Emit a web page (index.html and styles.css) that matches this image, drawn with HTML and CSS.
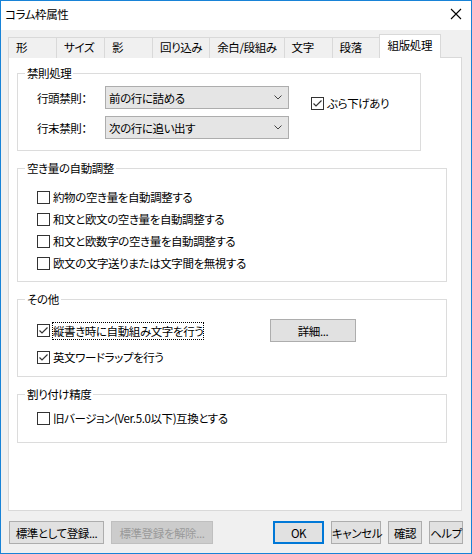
FILE: index.html
```html
<!DOCTYPE html>
<html lang="ja">
<head>
  <meta charset="UTF-8" />
  <title>コラム枠属性</title>
  <link rel="stylesheet" href="styles.css">
</head>
<body>
  <div class="window">
    <div class="titlebar">
      <span class="title">コラム枠属性</span>
      <svg class="close" width="12" height="12" viewBox="0 0 12 12">
        <path d="M1 1 L11 11 M11 1 L1 11" stroke="#000" stroke-width="1.1" fill="none" />
      </svg>
    </div>

    <div class="tabs">
      <div class="tab">形</div>
      <div class="tab">サイズ</div>
      <div class="tab">影</div>
      <div class="tab">回り込み</div>
      <div class="tab">余白/段組み</div>
      <div class="tab">文字</div>
      <div class="tab">段落</div>
      <div class="tab active">組版処理</div>
    </div>

    <div class="panel">
      <fieldset class="group narrow">
        <legend>禁則処理</legend>
        <div class="kinsoku">
          <div class="fields">
            <div class="field">
              <span class="field-label">行頭禁則：</span>
              <div class="select">前の行に詰める
                <svg class="chevron" width="8" height="5" viewBox="0 0 8 5"><path d="M0.5 0.5 L4 4 L7.5 0.5" stroke="#444" fill="none" /></svg>
              </div>
            </div>
            <div class="field">
              <span class="field-label">行末禁則：</span>
              <div class="select">次の行に追い出す
                <svg class="chevron" width="8" height="5" viewBox="0 0 8 5"><path d="M0.5 0.5 L4 4 L7.5 0.5" stroke="#444" fill="none" /></svg>
              </div>
            </div>
          </div>
          <label class="check">
            <span class="box"><svg width="11" height="11" viewBox="0 0 11 11"><path d="M1.5 5.5 L4 8 L9.5 2.5" stroke="#333" stroke-width="1.2" fill="none" /></svg></span>
            ぶら下げあり
          </label>
        </div>
      </fieldset>

      <fieldset class="group">
        <legend>空き量の自動調整</legend>
        <div class="checklist spacing">
          <label class="check"><span class="box"></span>約物の空き量を自動調整する</label>
          <label class="check"><span class="box"></span>和文と欧文の空き量を自動調整する</label>
          <label class="check"><span class="box"></span>和文と欧数字の空き量を自動調整する</label>
          <label class="check"><span class="box"></span>欧文の文字送りまたは文字間を無視する</label>
        </div>
      </fieldset>

      <fieldset class="group">
        <legend>その他</legend>
        <div class="other">
          <div class="other-row">
            <label class="check wide">
              <span class="box"><svg width="11" height="11" viewBox="0 0 11 11"><path d="M1.5 5.5 L4 8 L9.5 2.5" stroke="#333" stroke-width="1.2" fill="none" /></svg></span>
              <span class="focused">縦書き時に自動組み文字を行う</span>
            </label>
            <button class="btn detail">詳細...</button>
          </div>
          <label class="check">
            <span class="box"><svg width="11" height="11" viewBox="0 0 11 11"><path d="M1.5 5.5 L4 8 L9.5 2.5" stroke="#333" stroke-width="1.2" fill="none" /></svg></span>
            英文ワードラップを行う
          </label>
        </div>
      </fieldset>

      <fieldset class="group">
        <legend>割り付け精度</legend>
        <div class="checklist precision">
          <label class="check"><span class="box"></span>旧バージョン(Ver.5.0以下)互換とする</label>
        </div>
      </fieldset>
    </div>

    <div class="footer">
      <button class="btn register">標準として登録...</button>
      <button class="btn disabled">標準登録を解除...</button>
      <div class="footer-right">
        <button class="btn ok">OK</button>
        <button class="btn cancel">キャンセル</button>
        <button class="btn small">確認</button>
        <button class="btn small">ヘルプ</button>
      </div>
    </div>
  </div>
</body>
</html>
```

FILE: styles.css
```css
body {
  margin: 0;
  background: #fff;
  font-family: "Noto Sans CJK JP", "Noto Sans", sans-serif;
  font-size: 11.5px;
  letter-spacing: -0.4px;
  color: #000;
  font-feature-settings: "palt";
}

.window {
  width: 472px;
  height: 554px;
  box-sizing: border-box;
  border: 1px solid #1883d7;
  background: #f0f0f0;
}

.titlebar {
  height: 29px;
  background: #fff;
  display: flex;
  align-items: center;
  padding: 0 9px 0 4px;
}

.title {
  flex: 1;
  line-height: 16px;
  margin-top: -4px;
}

.close {
  margin-top: -4px;
}

/* tabs */
.tabs {
  display: flex;
  align-items: flex-end;
  height: 24px;
  margin: 4px 0 -1px 7px;
  position: relative;
  z-index: 1;
}

.tab {
  min-width: 49px;
  box-sizing: border-box;
  height: 21px;
  padding: 0 7px 0 7px;
  line-height: 19px;
  border: 1px solid #d9d9d9;
  border-bottom: none;
  margin-left: -1px;
  background: #f0f0f0;
  white-space: nowrap;
}

.tab:first-child {
  margin-left: 0;
}

.tab.active {
  height: 24px;
  line-height: 20px;
  padding: 0 8px 0 8px;
  background: #fff;
  margin-left: -2px;
}

/* panel */
.panel {
  margin: 0 9px 0 7px;
  height: 454px;
  box-sizing: border-box;
  border: 1px solid #d9d9d9;
  background: #fff;
  padding-top: 7px;
}

.group {
  margin: 0 14px 9px 8px;
  padding: 0;
  border: 1px solid #dcdcdc;
  min-width: 0;
}

.group.narrow {
  margin-right: 40px;
}

.group legend {
  margin-left: 7px;
  padding: 0 2px;
  line-height: 16px;
}

/* 禁則処理 */
.kinsoku {
  display: flex;
  align-items: flex-start;
  padding: 5px 0 11px 19px;
}

.fields {
  display: flex;
  flex-direction: column;
  gap: 7px;
}

.field {
  display: flex;
  align-items: center;
}

.field-label {
  width: 68px;
}

.select {
  width: 184px;
  height: 23px;
  box-sizing: border-box;
  border: 1px solid #adadad;
  background: #e5e5e5;
  display: flex;
  align-items: center;
  justify-content: space-between;
  padding: 0 6px 0 3px;
  line-height: 20px;
}

.kinsoku > .check {
  margin: 6px 0 0 22px;
}

/* checkboxes */
.check {
  display: flex;
  align-items: center;
  height: 22px;
  gap: 3px;
  white-space: nowrap;
}

.box {
  width: 13px;
  height: 13px;
  box-sizing: border-box;
  border: 1px solid #333;
  background: #fff;
  display: flex;
  align-items: center;
  justify-content: center;
  flex-shrink: 0;
}

.checklist {
  padding-left: 19px;
}

.spacing {
  padding-top: 10px;
  padding-bottom: 7px;
}

.precision {
  padding-top: 5px;
  padding-bottom: 13px;
}

/* その他 */
.other {
  padding: 12px 0 8px 19px;
  display: flex;
  flex-direction: column;
  gap: 4px;
}

.other-row {
  display: flex;
  align-items: center;
}

.check.wide {
  width: 233px;
}

.focused {
  outline: 1px dotted #000;
  line-height: 16px;
}

/* buttons */
.btn {
  font: inherit;
  letter-spacing: inherit;
  font-feature-settings: "palt";
  height: 23px;
  box-sizing: border-box;
  border: 1px solid #adadad;
  background: #e1e1e1;
  color: #000;
  padding: 0;
  line-height: 20px;
  white-space: nowrap;
}

.detail {
  width: 86px;
}

.btn.register {
  width: 95px;
}

.btn.disabled {
  background: #cccccc;
  border-color: #bfbfbf;
  color: #9a9a9a;
  width: 102px;
}

.btn.ok {
  width: 51px;
  border: 2px solid #0078d7;
}

.btn.cancel {
  width: 50px;
}

.btn.small {
  width: 34px;
}

.footer {
  display: flex;
  gap: 7px;
  padding: 10px 8px 0 8px;
}

.footer-right {
  margin-left: auto;
  display: flex;
  gap: 7px;
}
```
